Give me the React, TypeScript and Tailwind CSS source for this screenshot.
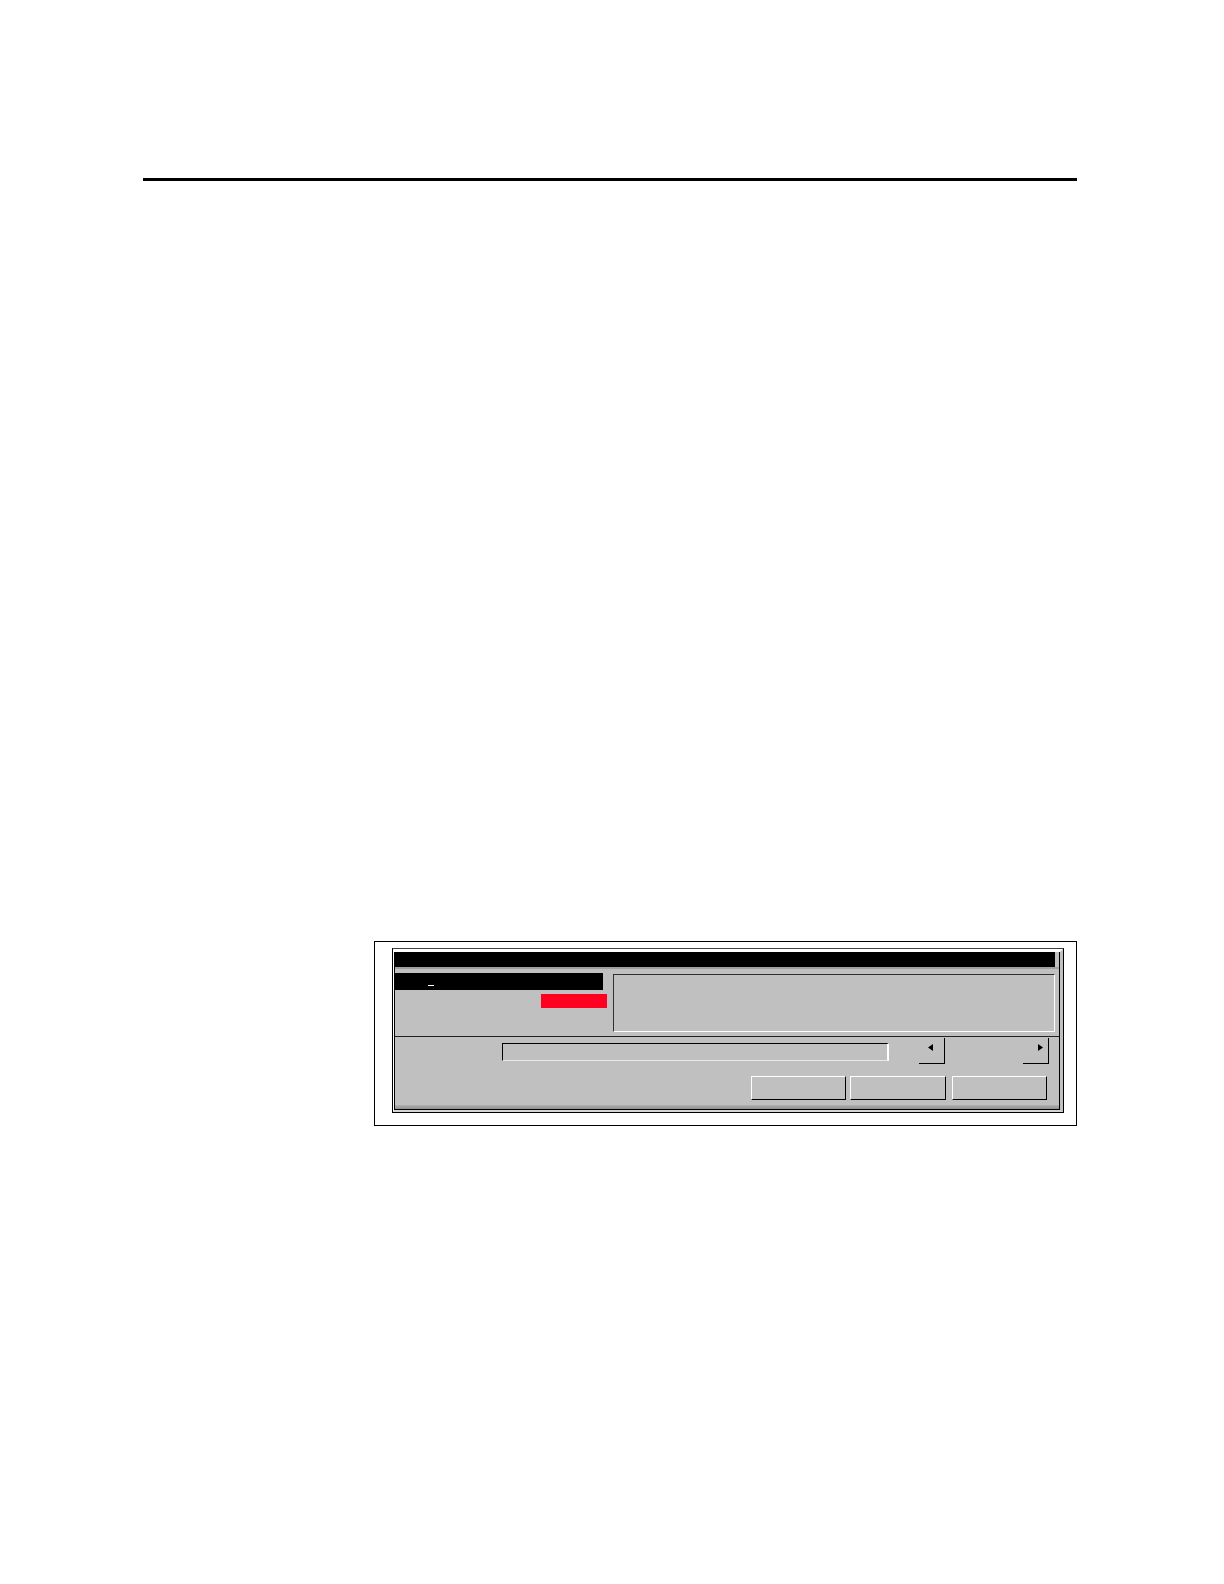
export default function App() {
  return (
    <div className="relative h-[1584px] w-[1224px] overflow-hidden bg-white font-['Liberation_Sans',sans-serif]">
      {/* header rule */}
      <div className="ml-[143px] mt-[178px] h-[3px] w-[934px] bg-black" />

      {/* figure frame */}
      <div className="ml-[374px] mt-[760px] h-[185px] w-[703px] border border-black bg-white pl-[17px] pt-[6px]">
        <Dialog />
      </div>
    </div>
  );
}

function Dialog() {
  return (
    <div className="h-[165px] w-[672px] border border-black border-t-[#404040] bg-white">
      <div className="h-full w-full border-b-2 border-l border-r-[3px] border-t-[3px] border-b-[#d4d4d4] border-l-white border-r-[#c0c0c0] border-t-white">
        <div className="flex h-full w-full flex-col border-b border-l border-r border-black bg-[#c0c0c0]">
          {/* title bar */}
          <div className="mr-1 h-[15px] shrink-0 bg-black" />
          <div className="h-[2px] shrink-0 bg-[#a0a0a0]" />
          <div className="h-[4px] shrink-0" />

          {/* main area */}
          <div className="flex h-[63px] shrink-0">
            <div className="flex w-[218px] shrink-0 flex-col">
              <div className="flex h-[17px] w-[208px] items-start bg-black pl-[33px] pt-[12px]">
                <span className="h-px w-[6px] bg-white" />
              </div>
              <div className="ml-[146px] mt-[4px] h-[14px] w-[66px] bg-[#ff0020]" />
            </div>
            <div className="mt-px h-[58px] w-[442px] border border-b-white border-l-[#303030] border-r-white border-t-[#303030] bg-[#c0c0c0]" />
          </div>

          {/* separator */}
          <div className="h-px shrink-0 bg-[#202020]" />

          {/* slider row */}
          <div className="flex h-[27px] shrink-0 items-start pt-px">
            <div className="ml-[107px] mt-[5px] h-[18px] w-[387px] border border-r-2 border-b-[#e8e8e8] border-l-black border-r-white border-t-black bg-[#c0c0c0]" />
            <div className="ml-[30px] flex h-[26px] w-[26px] items-start justify-center border-b border-r border-black pt-[6px]">
              <svg width="6" height="7" viewBox="0 0 6 7" className="ml-[-2px]">
                <path d="M0 3.5 L5 0 L5 7 Z" fill="black" />
              </svg>
            </div>
            <div className="ml-[78px] flex h-[26px] w-[26px] items-start justify-end border-b border-r border-black pr-[5px] pt-[6px]">
              <svg width="6" height="7" viewBox="0 0 6 7">
                <path d="M6 3.5 L1 0 L1 7 Z" fill="black" />
              </svg>
            </div>
          </div>

          {/* buttons */}
          <div className="ml-[356px] mt-[12px] flex h-[24px] shrink-0">
            <div className="h-[24px] w-[95px] border border-b-black border-l-white border-r-black border-t-white" />
            <div className="ml-[4px] h-[24px] w-[96px] border border-b-black border-l-white border-r-black border-t-white" />
            <div className="ml-[6px] h-[24px] w-[95px] border border-b-black border-l-white border-r-black border-t-white" />
          </div>

          <div className="mt-auto h-[4px] shrink-0 bg-gradient-to-b from-[#b0b0b0] to-[#909090]" />
        </div>
      </div>
    </div>
  );
}
